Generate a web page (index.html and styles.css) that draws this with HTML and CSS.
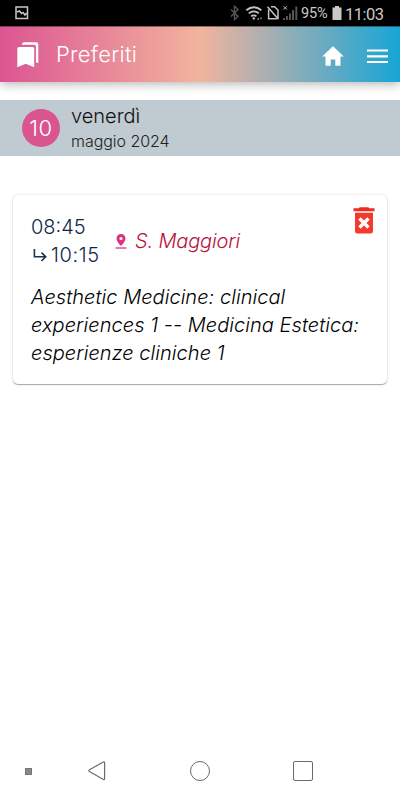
FILE: index.html
```
<!DOCTYPE html>
<html lang="it">
<head>
    <meta charset="UTF-8">
    <meta name="viewport" content="width=device-width, initial-scale=1.0">
    <title>Preferiti</title>
    <link rel="stylesheet" href="styles.css">
</head>
<body>
    <div class="status-bar">
        <svg class="picture" width="14" height="14" viewBox="0 0 14 14">
            <path d="M1 1h11.5v11.5H1zM2 6l2.500-1 2 2.500 1.500-1 2 2.500 1.500-2" fill="none" stroke="#c9c9c5" stroke-width="1.500"/>
        </svg>
        <svg class="signals" width="68" height="16" viewBox="0 0 68 16">
            <path d="M1 4.500l7 7-3.500 3V1.200L8 4.500l-7 7" fill="none" stroke="#555" stroke-width="1.400"/>
            <g fill="none" stroke="#c4c4c4" stroke-width="1.800">
                <path d="M16.300 5.200q7.500-6 15 0M18.800 8.400q5-4 10 0M21.200 11.300q2.600-2 5.200 0"/>
            </g>
            <path d="M22.200 13.300l1.600-1.400 1.600 1.400-1.600 1.700zM27 14.500l1.200-1.800 1.200 1.800zM30 12.700h2l-1 1.800z" fill="#c4c4c4"/>
            <path d="M41 1.800h3.500L48 5v8M38.600 4.500v9.300h8.200M37.500 1.800l11 12.400" fill="none" stroke="#c4c4c4" stroke-width="1.500"/>
            <path d="M53.600 1.200l3.400 3.400M57 1.200l-3.400 3.400" stroke="#c4c4c4" stroke-width="1"/>
            <path d="M53 15v-2h2v2zM56 15v-4h2v4zM59 15V8.500h2V15zM62 15V5h2v10zM65.300 15V1.500h2V15z" fill="#555"/>
        </svg>
        <span class="percent">95%</span>
        <svg class="battery" width="10" height="14" viewBox="0 0 10 14">
            <path d="M3 0h4v1.500h2.500V14h-9V1.500H3z" fill="#c9c9c9"/>
        </svg>
        <span class="clock">11:03</span>
    </div>

    <div class="header">
        <svg class="bookmarks" width="22" height="26" viewBox="0 0 22 26">
            <path d="M2.200 5h13.200a1.800 1.800 0 0 1 1.800 1.800V25.200L8.700 21.700.3 25.200V6.800A1.800 1.800 0 0 1 2.200 5z" fill="#fff"/>
            <path d="M5 1.800Q5.500.3 7 .3h12.300a2 2 0 0 1 2 2v18.900l-2.300-1V4.700a2 2 0 0 0-2-2H5z" fill="#fff"/>
        </svg>
        <h1 class="title">Preferiti</h1>
        <svg class="home" width="22" height="20" viewBox="0 0 22 20">
            <path d="M11 .2L21.800 10.500h-3.300v9.300h-5.200v-6.300H8.700v6.300H3.500v-9.300H.2z" fill="#fff"/>
        </svg>
        <svg class="menu" width="21" height="15" viewBox="0 0 21 15">
            <path d="M0 1.500h21M0 7.400h21M0 13h21" stroke="#fff" stroke-width="2.200"/>
        </svg>
    </div>

    <div class="day">
        <div class="day-number">10</div>
        <div class="day-text">
            <div class="weekday">venerdì</div>
            <div class="month">maggio 2024</div>
        </div>
    </div>

    <div class="card">
        <div class="card-top">
            <div class="times">
                <div class="start">08:45</div>
                <div class="end">
                    <svg width="14" height="13" viewBox="0 0 14 13">
                        <path d="M1.400 0v7.800h10.800M8.500 3.600l4.200 4.200-4.200 4.200" fill="none" stroke="#1b3150" stroke-width="1.600"/>
                    </svg>
                    <span>10:15</span>
                </div>
            </div>
            <div class="place">
                <svg width="12" height="15" viewBox="0 0 12 15">
                    <path fill-rule="evenodd" d="M6 0c2.600 0 4.500 1.900 4.500 4.500C10.500 7.700 6 12 6 12S1.500 7.700 1.500 4.500C1.500 1.900 3.400 0 6 0zm0 2.900a1.600 1.600 0 1 0 0 3.200 1.600 1.600 0 0 0 0-3.200z" fill="#d9357f"/>
                    <path d="M.5 14h11" stroke="#d9357f" stroke-width="1.300"/>
                </svg>
                <span>S. Maggiori</span>
            </div>
            <svg class="trash" width="22" height="27" viewBox="0 0 22 27">
                <path d="M.5 1.300h5.200L6.700.3h8.600l1 1h5.200v3H.5z" fill="#f22a1c"/>
                <path d="M2 5.800h18v18.400a2.300 2.300 0 0 1-2.300 2.300H4.300A2.300 2.300 0 0 1 2 24.200z" fill="#f33a2d"/>
                <path d="M6.500 11.500l9 9M15.500 11.500l-9 9" stroke="#fff" stroke-width="3.400"/>
            </svg>
        </div>
        <div class="description">Aesthetic Medicine: clinical experiences 1 -- Medicina Estetica: esperienze cliniche 1</div>
    </div>

    <div class="nav-bar">
        <div class="nav-dot"></div>
        <svg class="nav-back" width="18" height="20" viewBox="0 0 18 20">
            <path d="M15.300 1L1.500 8.800q-1.300.9 0 1.800L15.300 18.500q1.300.4 1.300-1V2q0-1.400-1.300-1z" fill="none" stroke="#6b6b6b" stroke-width="1.200"/>
        </svg>
        <div class="nav-home"></div>
        <div class="nav-recent"></div>
    </div>
</body>
</html>
```

FILE: styles.css
```
* {
    box-sizing: border-box;
}
body {
    margin: 0;
    height: 800px;
    display: flex;
    flex-direction: column;
    background-color: #fff;
    font-family: Inter, sans-serif;
    font-weight: 300;
    overflow: hidden;
}
svg {
    display: block;
    flex-shrink: 0;
}
.status-bar {
    height: 26px;
    padding: 0 16px 0 15px;
    display: flex;
    align-items: center;
    background-color: #000;
    color: #c9c9c9;
    font-family: Roboto, sans-serif;
    font-weight: 400;
}
.signals {
    margin-left: 201px;
}
.percent {
    width: 27px;
    margin-left: 3px;
    font-size: 14.5px;
    letter-spacing: -0.2px;
    padding-top: 1px;
}
.battery {
    margin-left: 4px;
}
.clock {
    margin-left: 3px;
    font-size: 16.5px;
    letter-spacing: -0.5px;
    padding-top: 2px;
}
.header {
    height: 56px;
    padding: 1px 12px 0 17px;
    display: flex;
    align-items: center;
    background: linear-gradient(90deg, #dc5592, #f2b49e 50%, #17a5d6);
    box-shadow: 0 2px 10px rgba(0, 0, 0, 0.3);
    border-top: 1px solid rgba(0, 0, 0, 0.4);
    color: #fff;
}
.title {
    flex: 1;
    margin: 0 0 2px 17px;
    font-size: 22px;
    font-weight: 300;
    letter-spacing: 0.25px;
}
.bookmarks {
    margin-bottom: 1px;
}
.home {
    margin-right: 23px;
    margin-top: 2px;
}
.menu {
    margin-top: 2px;
}
.day {
    height: 56px;
    margin-top: 18px;
    padding-left: 22px;
    display: flex;
    align-items: center;
    background-color: #c0cad1;
    color: #111;
}
.day-number {
    width: 38px;
    height: 38px;
    border-radius: 50%;
    background-color: #d9558f;
    color: #fff;
    font-size: 22px;
    line-height: 38px;
    letter-spacing: 0.7px;
    text-align: center;
}
.day-text {
    margin-left: 11px;
    padding-bottom: 2px;
}
.weekday {
    font-size: 20px;
    line-height: 28px;
}
.month {
    font-size: 16px;
    line-height: 23px;
    letter-spacing: -0.05px;
    color: #222;
}
.card {
    height: 189px;
    margin: 39px 13px 0;
    padding: 18px;
    border-radius: 5px;
    background-color: #fff;
    box-shadow: 0 1px 1px rgba(0, 0, 0, 0.3), 0 0 3px rgba(0, 0, 0, 0.15);
    font-size: 20px;
    line-height: 28px;
}
.card-top {
    display: flex;
    height: 56px;
}
.times {
    width: 84px;
    color: #10264a;
}
.end {
    display: flex;
    align-items: center;
    gap: 4px;
    padding-left: 2px;
    letter-spacing: 0.6px;
}
.place {
    flex: 1;
    display: flex;
    align-items: center;
    gap: 8px;
    color: #b80f3c;
    font-style: italic;
    letter-spacing: -0.15px;
}
.trash {
    margin: -6px -6px 0 0;
}
.description {
    margin-top: 14px;
    color: #000;
    font-style: italic;
    letter-spacing: 0.05px;
}
.nav-bar {
    height: 58px;
    margin-top: auto;
    padding-left: 25px;
    display: flex;
    align-items: center;
}
.nav-dot {
    width: 7px;
    height: 7px;
    background-color: #888;
    border: 1px solid #777;
}
.nav-back {
    margin-left: 56px;
}
.nav-home {
    width: 20px;
    height: 20px;
    margin-left: 84px;
    border: 1.4px solid #6b6b6b;
    border-radius: 50%;
}
.nav-recent {
    width: 20px;
    height: 20px;
    margin-left: 83px;
    border: 1.4px solid #6b6b6b;
    border-radius: 2px;
}
```
